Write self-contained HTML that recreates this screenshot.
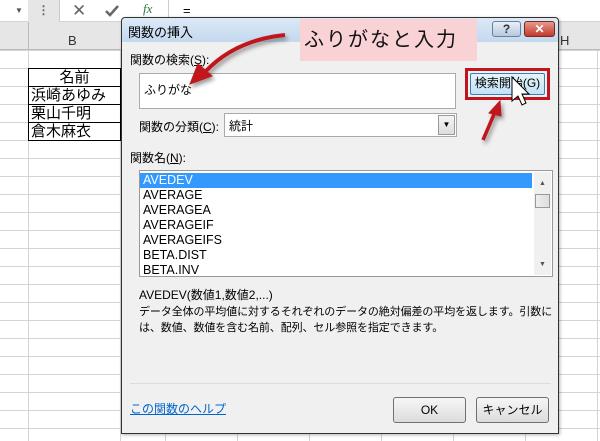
<!DOCTYPE html>
<html><head><meta charset="utf-8"><style>
*{margin:0;padding:0;box-sizing:border-box}
body{width:600px;height:441px;overflow:hidden;background:#fff;position:relative;font-family:"Liberation Sans","Noto Sans CJK JP",sans-serif;font-size:12px;color:#000}
.a{position:absolute}
</style></head><body>
<!-- grid -->
<div class="a" style="left:0;top:50px;width:600px;height:391px;background-image:linear-gradient(#d4d4d4 1px,transparent 1px);background-size:10px 18px"></div>
<div class="a" style="left:121px;top:50px;width:479px;height:391px;background-image:linear-gradient(90deg,#d4d4d4 1px,transparent 1px);background-size:72px 18px;background-position:44px 0"></div>
<div class="a" style="left:28px;top:50px;width:1px;height:391px;background:#d4d4d4"></div>
<div class="a" style="left:120px;top:50px;width:1px;height:391px;background:#d4d4d4"></div>
<!-- formula bar -->
<div class="a" style="left:0;top:0;width:600px;height:22px;background:#fff;border-bottom:1px solid #d4d4d4"></div>
<div class="a" style="left:15px;top:6px;font-size:8px;color:#555">▼</div>
<div class="a" style="left:28px;top:0;width:32px;height:22px;background:#e6e6e6;border-right:1px solid #ccc;text-align:center;color:#666;font-weight:bold;line-height:20px">⋮</div>
<div class="a" style="left:72px;top:1px;font-size:17px;color:#666">✕</div>
<svg class="a" style="left:104px;top:4px" width="16" height="14"><path d="M2 7 L6 11 L14 2" fill="none" stroke="#666" stroke-width="2.5"/></svg>
<div class="a" style="left:143px;top:1px;font-size:13px;color:#2a7a3a;font-style:italic;font-family:'Liberation Serif',serif">fx</div>
<div class="a" style="left:168px;top:0;width:1px;height:22px;background:#ccc"></div>
<div class="a" style="left:183px;top:3px;font-size:13px">=</div>
<!-- headers -->
<div class="a" style="left:0;top:22px;width:600px;height:28px;background:#e6e6e6;border-bottom:1px solid #bbb"></div>
<div class="a" style="left:28px;top:22px;width:1px;height:28px;background:#bbb"></div>
<div class="a" style="left:68px;top:33px;font-size:13px;color:#333">B</div>
<div class="a" style="left:560px;top:33px;font-size:13px;color:#333">H</div>
<!-- name table -->
<div class="a" style="left:28px;top:68px;width:93px;height:73px;border:1px solid #000;background:#fff;font-size:15px;line-height:17px">
<div style="text-align:center;border-bottom:1px solid #000;height:18px">名前</div>
<div style="border-bottom:1px solid #000;padding-left:2px;height:18px">浜崎あゆみ</div>
<div style="border-bottom:1px solid #000;padding-left:2px;height:18px">栗山千明</div>
<div style="padding-left:2px">倉木麻衣</div>
</div>
<!-- dialog -->
<div class="a" style="left:121px;top:17px;width:438px;height:417px;background:#f0f0f0;border:1px solid #333;border-radius:4px 4px 0 0;box-shadow:1px 1px 3px rgba(0,0,0,.3)"></div>
<div class="a" style="left:122px;top:18px;width:436px;height:24px;background:linear-gradient(#dce9f7,#c4d8ee);border-radius:4px 4px 0 0"></div>
<div class="a" style="left:128px;top:22px;font-size:13px">関数の挿入</div>
<div class="a" style="left:492px;top:21px;width:29px;height:16px;border:1px solid #6b7f99;border-radius:3px;background:linear-gradient(#e8eff8,#b7c8dd);text-align:center;font-size:12px;font-weight:bold;color:#333;line-height:14px">?</div>
<div class="a" style="left:524px;top:21px;width:31px;height:16px;border:1px solid #7a2a20;border-radius:3px;background:linear-gradient(#e79a8c,#c0392b);text-align:center;font-size:12px;font-weight:bold;color:#fff;line-height:14px">✕</div>
<!-- pink callout -->
<div class="a" style="left:300px;top:19px;width:177px;height:42px;background:#f8d2d5;font-size:20px;letter-spacing:2px;line-height:42px;padding-left:4px;color:#111">ふりがなと入力</div>
<div class="a" style="left:130px;top:51px">関数の検索(<u>S</u>):</div>
<div class="a" style="left:139px;top:73px;width:317px;height:36px;background:#fff;border:1px solid #aaa;padding:7px 0 0 4px">ふりがな</div>
<div class="a" style="left:465px;top:68px;width:85px;height:32px;border:3px solid #c0151c;padding:2px">
<div style="width:100%;height:100%;border:1px solid #3c7fb1;border-radius:2px;background:linear-gradient(#e6f4fc,#bfe3f6);text-align:center;line-height:19px;font-size:12px">検索開始(G)</div></div>
<div class="a" style="left:139px;top:118px">関数の分類(<u>C</u>):</div>
<div class="a" style="left:224px;top:113px;width:233px;height:24px;background:#fff;border:1px solid #aaa;padding:3px 0 0 4px">統計
<div class="a" style="right:1px;top:1px;width:17px;height:20px;background:linear-gradient(#f4f4f4,#ddd);border:1px solid #999;font-size:8px;text-align:center;line-height:18px">▼</div></div>
<div class="a" style="left:130px;top:149px">関数名(<u>N</u>):</div>
<div class="a" style="left:139px;top:170px;width:414px;height:107px;background:#fff;border:1px solid #999;line-height:15px;padding-top:2px;font-size:12.5px">
<div style="background:#3399ff;color:#fff;width:392px;padding-left:3px">AVEDEV</div>
<div style="padding-left:3px">AVERAGE<br>AVERAGEA<br>AVERAGEIF<br>AVERAGEIFS<br>BETA.DIST<br>BETA.INV</div>
<div class="a" style="right:1px;top:1px;width:17px;height:103px;background:#f0f0f0">
<div style="font-size:7px;text-align:center;color:#555;margin-top:4px">▲</div>
<div style="width:15px;height:14px;margin:3px 1px;border:1px solid #999;background:linear-gradient(90deg,#eee,#ddd)"></div>
<div class="a" style="bottom:3px;width:17px;font-size:7px;text-align:center;color:#555">▼</div></div></div>
<div class="a" style="left:139px;top:286px">AVEDEV(数値1,数値2,...)</div>
<div class="a" style="left:139px;top:304px;width:420px;line-height:16px;font-size:11px;letter-spacing:-0.1px;white-space:nowrap">データ全体の平均値に対するそれぞれのデータの絶対偏差の平均を返します。引数に<br>は、数値、数値を含む名前、配列、セル参照を指定できます。</div>
<div class="a" style="left:130px;top:383px;width:421px;height:1px;background:#d5dde5"></div>
<div class="a" style="left:130px;top:400px;color:#0066cc;text-decoration:underline">この関数のヘルプ</div>
<div class="a" style="left:393px;top:397px;width:73px;height:26px;border:1px solid #707070;border-radius:3px;background:linear-gradient(#f6f6f6,#dcdcdc);text-align:center;line-height:24px">OK</div>
<div class="a" style="left:476px;top:397px;width:73px;height:26px;border:1px solid #707070;border-radius:3px;background:linear-gradient(#f6f6f6,#dcdcdc);text-align:center;line-height:24px">キャンセル</div>
<!-- arrows & cursor -->
<svg class="a" style="left:0;top:0" width="600" height="441">
<defs><filter id="s"><feDropShadow dx="2" dy="3" stdDeviation="2" flood-opacity=".4"/></filter></defs>
<g filter="url(#s)" fill="#c0151c" stroke="#c0151c">
<path d="M285 35 Q235 40 205 72" fill="none" stroke-width="4"/>
<path d="M190 84 L198 64 L212 76 Z"/>
<path d="M483 140 L495 112" fill="none" stroke-width="3.5"/>
<path d="M500 101 L489 113 L501 116 Z"/>
</g>
<path d="M512 77 L512 101 L518 96 L522 105 L526 103 L522 94 L529 94 Z" fill="#fff" stroke="#000" stroke-width="1"/>
</svg>
</body></html>
